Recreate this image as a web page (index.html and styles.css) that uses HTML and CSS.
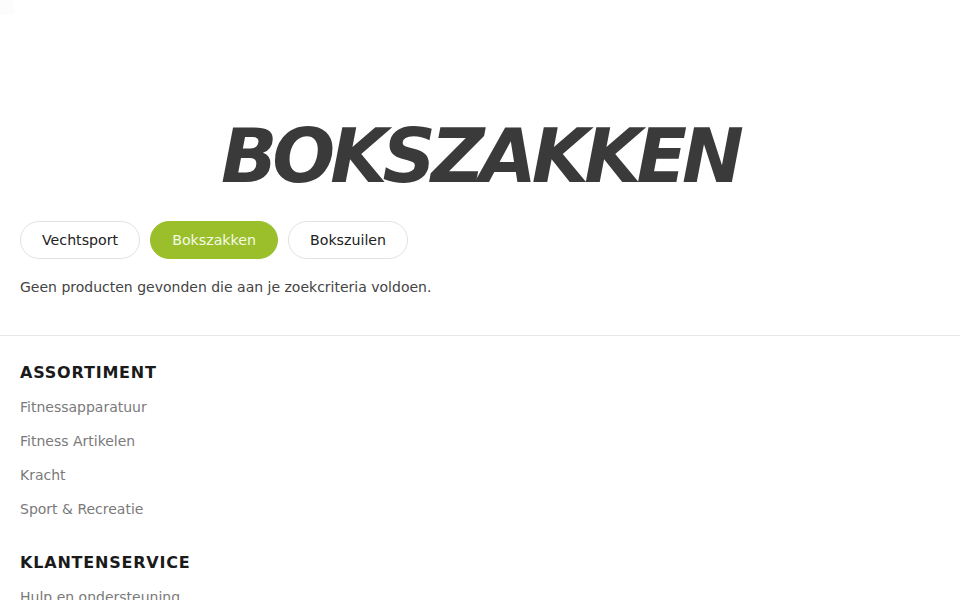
FILE: index.html
```html
<!DOCTYPE html>
<html lang="nl">
<head>
<meta charset="utf-8">
<title>Bokszakken</title>
<link rel="stylesheet" href="styles.css">
</head>
<body>
<div class="corner"></div>
<main class="main">
  <h1 class="page-title">BOKSZAKKEN</h1>
  <nav class="pills">
    <a class="pill" href="#">Vechtsport</a>
    <a class="pill pill-active" href="#">Bokszakken</a>
    <a class="pill" href="#">Bokszuilen</a>
  </nav>
  <p class="empty">Geen producten gevonden die aan je zoekcriteria voldoen.</p>
</main>
<footer class="footer">
  <section class="footer-col">
    <h2 class="footer-title">ASSORTIMENT</h2>
    <ul class="footer-links">
      <li><a href="#">Fitnessapparatuur</a></li>
      <li><a href="#">Fitness Artikelen</a></li>
      <li><a href="#">Kracht</a></li>
      <li><a href="#">Sport &amp; Recreatie</a></li>
    </ul>
  </section>
  <section class="footer-col">
    <h2 class="footer-title">KLANTENSERVICE</h2>
    <ul class="footer-links">
      <li><a href="#">Hulp en ondersteuning</a></li>
    </ul>
  </section>
</footer>
</body>
</html>
```
FILE: styles.css
```css
* { box-sizing: border-box; }
html, body { margin: 0; padding: 0; background: #fff; }
body {
  font-family: "DejaVu Sans", "Liberation Sans", sans-serif;
  color: #333;
  overflow: hidden;
}
.corner {
  position: absolute;
  left: 0; top: 0;
  width: 14px; height: 15px;
  background: #fcfcfc;
}
.main {
  padding: 119px 20px 0;
}
.page-title {
  margin: 0;
  text-align: center;
  font-size: 74px;
  line-height: 74px;
  font-weight: 700;
  font-style: italic;
  color: #3a3a3a;
  letter-spacing: -5px;
}
.pills {
  display: flex;
  gap: 10px;
  margin-top: 28px;
}
.pill {
  display: inline-flex;
  align-items: center;
  justify-content: center;
  height: 38px;
  padding: 0 21px;
  border: 1px solid #e2e2e2;
  border-radius: 19px;
  font-size: 14.2px;
  color: #222;
  text-decoration: none;
  background: #fff;
}
.pill-active {
  background: #9bbf2b;
  border-color: #9bbf2b;
  color: #f4fae6;
}
.empty {
  margin: 18px 0 0;
  font-size: 14px;
  line-height: 20px;
  color: #444;
}
.footer {
  margin-top: 38px;
  border-top: 1px solid #e6e6e6;
  padding: 27px 20px 0;
}
.footer-col + .footer-col { margin-top: 27px; }
.footer-title {
  margin: 0;
  font-size: 16px;
  line-height: 20px;
  font-weight: 700;
  letter-spacing: 0.8px;
  color: #1a1a1a;
}
.footer-links {
  list-style: none;
  margin: 7px 0 0;
  padding: 0;
}
.footer-links li {
  line-height: 34px;
  font-size: 14px;
}
.footer-links a {
  color: #7a7a7a;
  text-decoration: none;
}
```
